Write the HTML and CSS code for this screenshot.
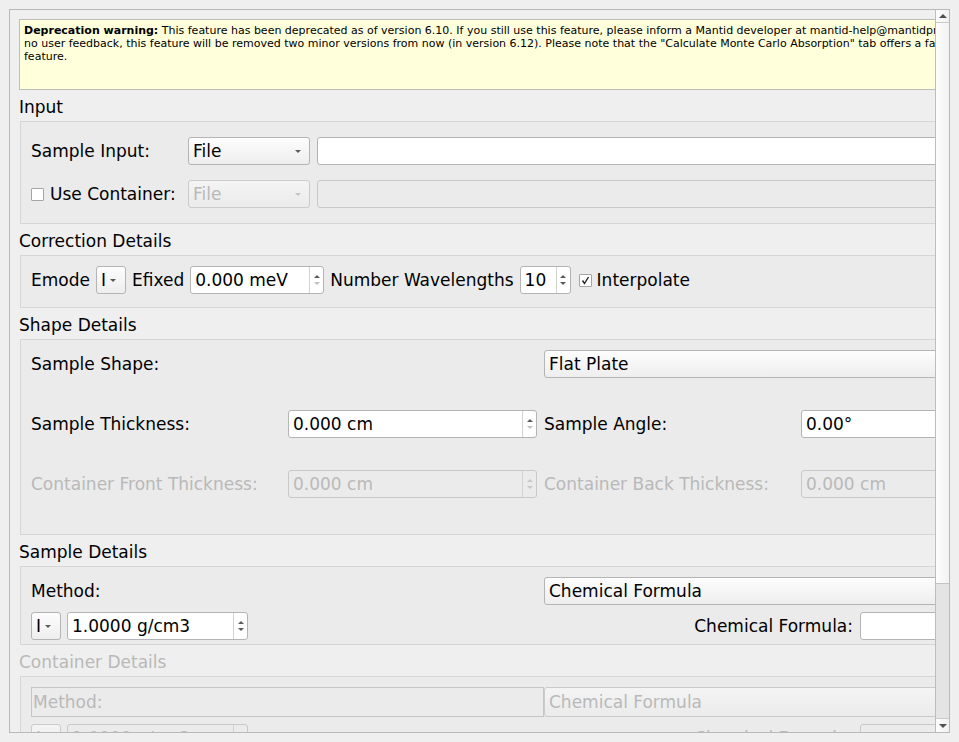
FILE: index.html
```html
<!DOCTYPE html>
<html>
<head>
<meta charset="utf-8">
<link rel="stylesheet" href="styles.css">
</head>
<body>
<div class="frame">
  <div class="viewport">
    <div class="content">
      <div class="warning"><b>Deprecation warning:</b> This feature has been deprecated as of version 6.10. If you still use this feature, please inform a Mantid developer at mantid-help@mantidproject.org. If there is<br>no user feedback, this feature will be removed two minor versions from now (in version 6.12). Please note that the "Calculate Monte Carlo Absorption" tab offers a faster alternative to this<br>feature.</div>

      <div class="heading">Input</div>
      <div class="group input-group">
        <span class="label">Sample Input:</span>
        <div class="combo"><span class="combo-text">File</span><span class="arrow"></span></div>
        <div class="edit"></div>
        <div class="check-row"><span class="checkbox"></span><span>Use Container:</span></div>
        <div class="combo disabled"><span class="combo-text">File</span><span class="arrow"></span></div>
        <div class="edit disabled"></div>
      </div>

      <div class="heading">Correction Details</div>
      <div class="group correction-group">
        <span class="label">Emode</span>
        <div class="combo small"><span class="combo-text">I</span><span class="arrow"></span></div>
        <span class="label">Efixed</span>
        <div class="spin efixed"><span class="spin-text">0.000 meV</span><span class="spin-btns"><span class="up"></span><span class="down off"></span></span></div>
        <span class="label">Number Wavelengths</span>
        <div class="spin wavelengths"><span class="spin-text">10</span><span class="spin-btns"><span class="up"></span><span class="down"></span></span></div>
        <div class="check-row interp"><span class="checkbox checked"><svg width="11" height="11" viewBox="0 0 11 11"><path d="M2.5 5.5 L4.5 8.5 L8.5 2" fill="none" stroke="#222" stroke-width="1.4"/></svg></span><span>Interpolate</span></div>
      </div>

      <div class="heading">Shape Details</div>
      <div class="group shape-group">
        <span class="label">Sample Shape:</span>
        <div class="combo span-34"><span class="combo-text">Flat Plate</span><span class="arrow"></span></div>
        <span class="label">Sample Thickness:</span>
        <div class="spin"><span class="spin-text">0.000 cm</span><span class="spin-btns"><span class="up"></span><span class="down off"></span></span></div>
        <span class="label">Sample Angle:</span>
        <div class="spin"><span class="spin-text">0.00°</span><span class="spin-btns"><span class="up"></span><span class="down off"></span></span></div>
        <span class="label disabled-text">Container Front Thickness:</span>
        <div class="spin disabled"><span class="spin-text">0.000 cm</span><span class="spin-btns"><span class="up"></span><span class="down"></span></span></div>
        <span class="label disabled-text">Container Back Thickness:</span>
        <div class="spin disabled"><span class="spin-text">0.000 cm</span><span class="spin-btns"><span class="up"></span><span class="down"></span></span></div>
      </div>

      <div class="heading">Sample Details</div>
      <div class="group details-group">
        <div class="grid4">
          <span class="label span-12">Method:</span>
          <div class="combo span-34"><span class="combo-text">Chemical Formula</span><span class="arrow"></span></div>
        </div>
        <div class="density-row">
          <div class="combo small"><span class="combo-text">I</span><span class="arrow"></span></div>
          <div class="spin density"><span class="spin-text">1.0000 g/cm3</span><span class="spin-btns"><span class="up"></span><span class="down"></span></span></div>
          <span class="label formula-label">Chemical Formula:</span>
          <div class="edit formula-edit"></div>
        </div>
      </div>

      <div class="heading disabled-text">Container Details</div>
      <div class="group details-group container-group">
        <div class="grid4 tall">
          <span class="framed-label disabled-text">Method:</span>
          <div class="combo span-34 disabled"><span class="combo-text">Chemical Formula</span><span class="arrow"></span></div>
        </div>
        <div class="density-row">
          <div class="combo small disabled"><span class="combo-text">I</span><span class="arrow"></span></div>
          <div class="spin density disabled"><span class="spin-text">1.0000 g/cm3</span><span class="spin-btns"><span class="up"></span><span class="down"></span></span></div>
          <span class="label formula-label disabled-text">Chemical Formula:</span>
          <div class="edit formula-edit disabled"></div>
        </div>
      </div>
    </div>
  </div>
  <div class="scrollbar">
    <div class="sb-up"><span class="sb-arrow-up"></span></div>
    <div class="sb-thumb"></div>
    <div class="sb-track"></div>
    <div class="sb-down"><span class="sb-arrow-down"></span></div>
  </div>
</div>
</body>
</html>
```

FILE: styles.css
```css
* { box-sizing: border-box; }

body {
  margin: 0;
  background: #efefef;
  font-family: "DejaVu Sans", "Liberation Sans", sans-serif;
  font-size: 17px;
  color: #000;
}

.frame {
  margin: 9px 0 0 9px;
  width: 941px;
  height: 724px;
  border: 1px solid #b9b9b9;
  display: flex;
  background: #efefef;
}

.viewport {
  flex: 1;
  min-width: 0;
  overflow: hidden;
}

.content {
  width: 1080px;
  padding: 9px 0 0 9px;
}

.warning {
  height: 71px;
  background: #ffffdc;
  border: 1px solid #bdbdbd;
  font-size: 11px;
  line-height: 13px;
  padding: 4px 4px;
  white-space: nowrap;
  overflow: hidden;
}

.heading {
  height: 20px;
  line-height: 20px;
  margin: 7px 0 4px 0;
  white-space: nowrap;
}

.group {
  margin-left: 1px;
  width: 1042px;
  border: 1px solid #d6d6d6;
  background: #ebebeb;
  white-space: nowrap;
}

.label { line-height: 20px; }

.disabled-text { color: #b9b9b9; }

/* Input */
.input-group {
  display: grid;
  grid-template-columns: 150px 122px 1fr;
  grid-auto-rows: 28px;
  column-gap: 7px;
  row-gap: 15px;
  align-items: center;
  padding: 15px 10px 15px 10px;
}

.check-row {
  display: flex;
  align-items: center;
  gap: 6px;
}

.checkbox {
  width: 13px;
  height: 13px;
  background: #fff;
  border: 1px solid #a6a6a6;
  border-radius: 1px;
  display: flex;
  align-items: center;
  justify-content: center;
  flex: none;
}

/* Correction */
.correction-group {
  display: flex;
  align-items: center;
  gap: 6px;
  padding: 10px 10px 13px 10px;
}

.correction-group > * { flex: none; }

.check-row.interp { margin-left: 2px; gap: 5px; }

/* Combos / edits / spins */
.combo {
  height: 28px;
  border: 1px solid #b4b4b4;
  border-radius: 3px;
  background: linear-gradient(#fdfdfd, #eeeeee);
  display: flex;
  align-items: center;
  padding: 0 8px 0 4px;
  overflow: hidden;
}

.combo-text {
  flex: 1;
  min-width: 0;
  overflow: hidden;
}

.arrow {
  flex: none;
  width: 0;
  height: 0;
  border-left: 3px solid transparent;
  border-right: 3px solid transparent;
  border-top: 3px solid #5a5a5a;
  margin-top: 1px;
}

.combo.small {
  width: 30px;
  padding: 0 6px 0 4px;
}

.combo.small .combo-text { flex: none; width: 9px; }

.combo.disabled {
  color: #b9b9b9;
  border-color: #cbcbcb;
  background: linear-gradient(#f4f4f4, #ebebeb);
}

.combo.disabled .arrow { border-top-color: #c4c4c4; }

.edit {
  height: 28px;
  background: #fff;
  border: 1px solid #b4b4b4;
  border-radius: 3px;
}

.edit.disabled {
  background: #ebebeb;
  border-color: #c9c9c9;
}

.spin {
  height: 28px;
  background: #fff;
  border: 1px solid #b4b4b4;
  border-radius: 3px;
  display: flex;
}

.spin-text {
  flex: 1;
  min-width: 0;
  padding-left: 4px;
  line-height: 26px;
  overflow: hidden;
}

.spin-btns {
  flex: none;
  width: 14px;
  border-left: 1px solid #d2d2d2;
  display: flex;
  flex-direction: column;
  justify-content: center;
  align-items: center;
  gap: 4px;
}

.spin-btns .up,
.spin-btns .down {
  width: 0;
  height: 0;
  border-left: 3px solid transparent;
  border-right: 3px solid transparent;
}

.spin-btns .up { border-bottom: 3px solid #5a5a5a; }
.spin-btns .down { border-top: 3px solid #5a5a5a; }
.spin-btns .down.off { border-top-color: #c0c0c0; }

.spin.disabled {
  background: #ebebeb;
  border-color: #c9c9c9;
  color: #b9b9b9;
}

.spin.disabled .spin-btns .up { border-bottom-color: #c8c8c8; }
.spin.disabled .spin-btns .down { border-top-color: #c8c8c8; }

.spin.efixed { width: 134px; }
.spin.wavelengths { width: 51px; }
.spin.density { width: 181px; }

/* Shape */
.shape-group {
  display: grid;
  grid-template-columns: 250px 249px 250px 250px;
  grid-auto-rows: 28px;
  column-gap: 7px;
  row-gap: 32px;
  align-items: center;
  padding: 10px 10px 36px 10px;
}

.span-34 { grid-column: 3 / 5; }
.span-12 { grid-column: 1 / 3; }
.shape-group > .label:first-child { grid-column: 1 / 3; }

/* Sample / container details */
.details-group {
  display: flex;
  flex-direction: column;
  gap: 7px;
  padding: 10px 10px 4px 10px;
}

.grid4 {
  display: grid;
  grid-template-columns: 250px 249px 250px 250px;
  grid-auto-rows: 28px;
  column-gap: 7px;
  align-items: center;
}

.grid4.tall { grid-auto-rows: 30px; }
.grid4.tall .combo { height: 30px; }

.density-row {
  display: flex;
  align-items: center;
  gap: 6px;
  height: 28px;
}

.formula-label { margin-left: auto; margin-right: 1px; }

.formula-edit { width: 191px; }

.framed-label {
  grid-column: 1 / 3;
  height: 30px;
  margin-right: -7px;
  border: 1px solid #c6c6c6;
  display: flex;
  align-items: center;
  padding-left: 1px;
}

.container-group { height: 80px; }

/* Scrollbar */
.scrollbar {
  flex: none;
  width: 14px;
  border-left: 1px solid #bdbdbd;
  display: flex;
  flex-direction: column;
  background: #e4e4e4;
}

.sb-up,
.sb-down {
  display: flex;
  align-items: center;
  justify-content: center;
  background: linear-gradient(90deg, #fdfdfd, #f1f1f1);
}

.sb-up {
  height: 13px;
  border-bottom: 1px solid #cacaca;
}

.sb-down {
  height: 14px;
  border-top: 1px solid #cacaca;
}

.sb-thumb {
  height: 561px;
  border-bottom: 1px solid #c4c4c4;
  background: linear-gradient(90deg, #fdfdfd, #f2f2f2);
}

.sb-track { flex: 1; }

.sb-arrow-up {
  width: 0;
  height: 0;
  border-left: 4px solid transparent;
  border-right: 4px solid transparent;
  border-bottom: 4px solid #505050;
}

.sb-arrow-down {
  width: 0;
  height: 0;
  border-left: 4px solid transparent;
  border-right: 4px solid transparent;
  border-top: 4px solid #505050;
}
```
